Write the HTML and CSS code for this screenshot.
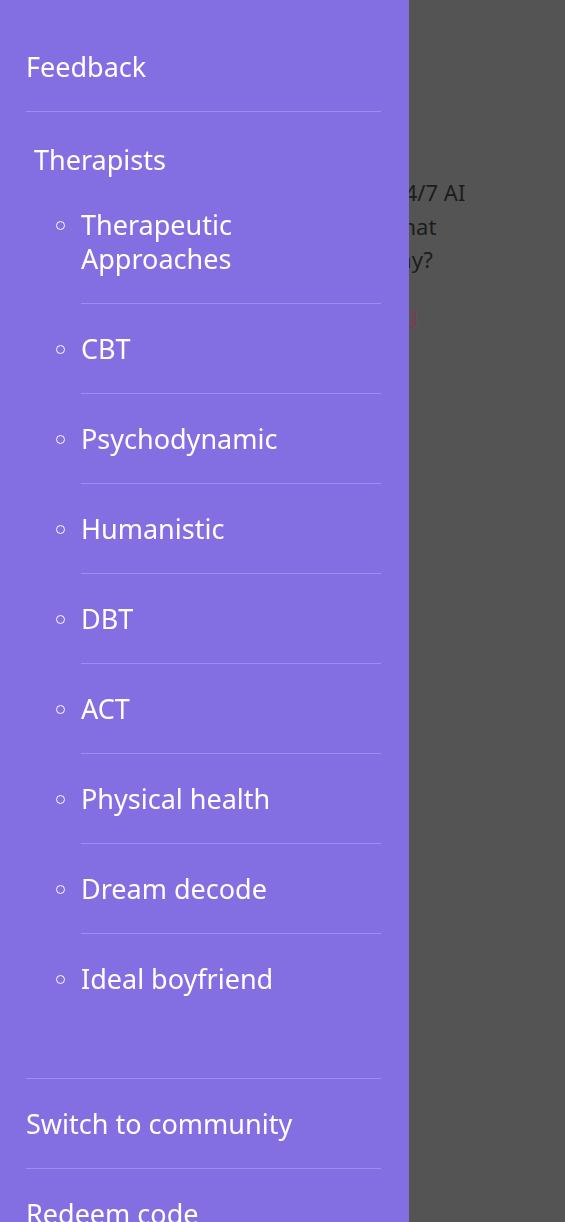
FILE: index.html
```html
<!DOCTYPE html>
<html lang="en">
<head>
    <meta charset="UTF-8">
    <meta name="viewport" content="width=device-width, initial-scale=1.0">
    <title>Menu</title>
    <link rel="stylesheet" href="styles.css">
</head>
<body>

    <div class="pagina">
        <div class="boas-vindas">
            <p>I'm your personal 24/7 AI</p>
            <p>therapist. Tell us, what</p>
            <p>are you feeling today?</p>
            <a href="#" class="link-chat">Explore your healing</a>
        </div>
    </div>

    <nav class="gaveta">
        <ul class="menu">
            <li class="item"><a href="#">Feedback</a></li>
            <li class="item grupo">
                <span class="grupo-titulo">Therapists</span>
                <ul class="submenu">
                    <li><a href="#">Therapeutic Approaches</a></li>
                    <li><a href="#">CBT</a></li>
                    <li><a href="#">Psychodynamic</a></li>
                    <li><a href="#">Humanistic</a></li>
                    <li><a href="#">DBT</a></li>
                    <li><a href="#">ACT</a></li>
                    <li><a href="#">Physical health</a></li>
                    <li><a href="#">Dream decode</a></li>
                    <li><a href="#">Ideal boyfriend</a></li>
                </ul>
            </li>
            <li class="item"><a href="#">Switch to community</a></li>
            <li class="item"><a href="#">Redeem code</a></li>
        </ul>
    </nav>

</body>
</html>
```

FILE: styles.css
```css
        body {
            margin: 0;
            background-color: #545454;
            font-family: 'Noto Sans', 'Open Sans', sans-serif;
            height: 1222px;
            overflow: hidden;
        }

        .pagina {
            padding-top: 176px;
            padding-left: 205px;
        }

        .boas-vindas p {
            margin: 0;
            font-size: 22px;
            line-height: 33.5px;
            color: #1c1c1c;
            white-space: nowrap;
        }

        .link-chat {
            display: block;
            margin-top: 21px;
            font-size: 22px;
            line-height: 33.5px;
            color: #7a3c56;
            text-decoration: none;
            white-space: nowrap;
        }

        .gaveta {
            position: fixed;
            top: 0;
            left: 0;
            width: 409px;
            height: 100%;
            background-color: #846fe2;
            padding: 22px 28px 0 26px;
            box-sizing: border-box;
        }

        .menu,
        .submenu {
            list-style: none;
            margin: 0;
            padding: 0;
        }

        .menu a,
        .grupo-titulo {
            color: #ffffff;
            text-decoration: none;
            font-size: 27px;
            line-height: 34px;
            display: block;
        }

        .item {
            padding: 28px 0 27px 0;
            border-bottom: 1px solid #9b8ff0;
        }

        .grupo {
            padding: 31px 0 55px 0;
        }

        .grupo-titulo {
            padding-left: 8px;
        }

        .submenu {
            margin-top: 3px;
            margin-left: 55px;
        }

        .submenu li {
            position: relative;
            padding: 28px 0 27px 0;
            border-bottom: 1px solid #9b8ff0;
        }

        .submenu li:last-child {
            border-bottom: none;
        }

        .submenu li::before {
            content: "";
            position: absolute;
            left: -25px;
            top: 41px;
            width: 7px;
            height: 7px;
            border: 1px solid #ffffff;
            border-radius: 50%;
        }

        .submenu a {
            padding-right: 90px;
        }
```
